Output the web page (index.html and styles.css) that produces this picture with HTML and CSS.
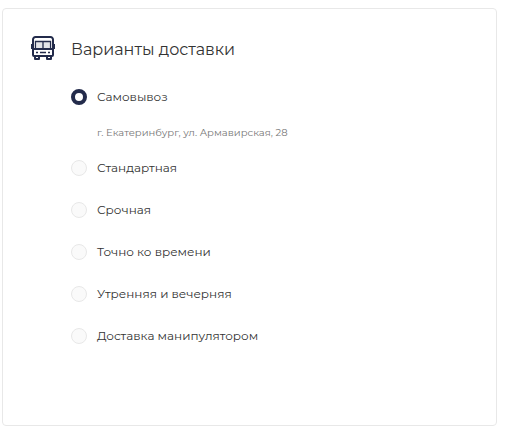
FILE: index.html
```html
<!DOCTYPE html>
<html lang="ru">
<head>
    <meta charset="UTF-8">
    <meta name="viewport" content="width=device-width, initial-scale=1.0">
    <title>Варианты доставки</title>
    <link rel="stylesheet" href="styles.css">
</head>
<body>
    <form class="delivery">
        <svg class="delivery-icon" width="24" height="24" viewBox="0 0 24 24" fill="none" stroke="#232b4b" stroke-width="2" aria-hidden="true">
            <!-- windows -->
            <path d="M6 6h5v6H6zM13 6h5v6h-5z" fill="#e3e4e8" stroke="none"/>
            <path d="M4.5 13V5.5h15V13M12 5v8" stroke-width="1.4"/>
            <!-- body -->
            <path d="M2 19V3.5A2.5 2.5 0 0 1 4.5 1h15A2.5 2.5 0 0 1 22 3.5V19a1 1 0 0 1-1 1H3a1 1 0 0 1-1-1z"/>
            <path d="M2 13h20"/>
            <!-- mirrors -->
            <path d="M1 8v5M23 8v5"/>
            <!-- lights and wheels -->
            <path d="M5 16.5h2M9 16.5h6M17 16.5h2" stroke-width="1.6"/>
            <path d="M4 20v3h4v-3M16 20v3h4v-3" stroke-linejoin="round"/>
        </svg>
        <div class="delivery-content">
            <h1>Варианты доставки</h1>
            <div class="options" role="radiogroup" aria-label="Варианты доставки">
                <div class="option">
                    <input type="radio" name="delivery" id="pickup" checked>
                    <label for="pickup">Самовывоз</label>
                </div>
                <p class="address">г. Екатеринбург, ул. Армавирская, 28</p>
                <div class="option">
                    <input type="radio" name="delivery" id="standard">
                    <label for="standard">Стандартная</label>
                </div>
                <div class="option">
                    <input type="radio" name="delivery" id="urgent">
                    <label for="urgent">Срочная</label>
                </div>
                <div class="option">
                    <input type="radio" name="delivery" id="exact">
                    <label for="exact">Точно ко времени</label>
                </div>
                <div class="option">
                    <input type="radio" name="delivery" id="morning">
                    <label for="morning">Утренняя и вечерняя</label>
                </div>
                <div class="option">
                    <input type="radio" name="delivery" id="crane">
                    <label for="crane">Доставка манипулятором</label>
                </div>
            </div>
        </div>
    </form>
</body>
</html>
```
FILE: styles.css
```css
body {
    font-family: Montserrat, Inter, "Open Sans", sans-serif;
    margin: 8px 9px 5px 2px;
    background-color: #fff;
    color: #333;
}
.delivery {
    display: flex;
    gap: 16px;
    padding: 27px 28px 81px;
    border: 1px solid #e8e8e8;
    border-radius: 4px;
}
.delivery-icon {
    flex: none;
}
.delivery-content {
    flex: 1;
}
h1 {
    margin: 0 0 25px;
    font-size: 16px;
    font-weight: 400;
    line-height: 28px;
}
.options {
    display: flex;
    flex-direction: column;
    gap: 26px;
}
.option {
    display: flex;
    align-items: center;
    gap: 10px;
    font-size: 12px;
    line-height: 16px;
}
.option input {
    appearance: none;
    box-sizing: border-box;
    flex: none;
    width: 16px;
    height: 16px;
    margin: 0;
    border: 1px solid #e8e8e8;
    border-radius: 50%;
    background-color: #fafafa;
    cursor: pointer;
}
.option input:checked {
    border: 4px solid #232b4b;
    background-color: #fff;
}
.option label {
    cursor: pointer;
}
.address {
    margin: -6px 0 -7px 26px;
    font-size: 10px;
    line-height: 16px;
    color: #777;
}
```
